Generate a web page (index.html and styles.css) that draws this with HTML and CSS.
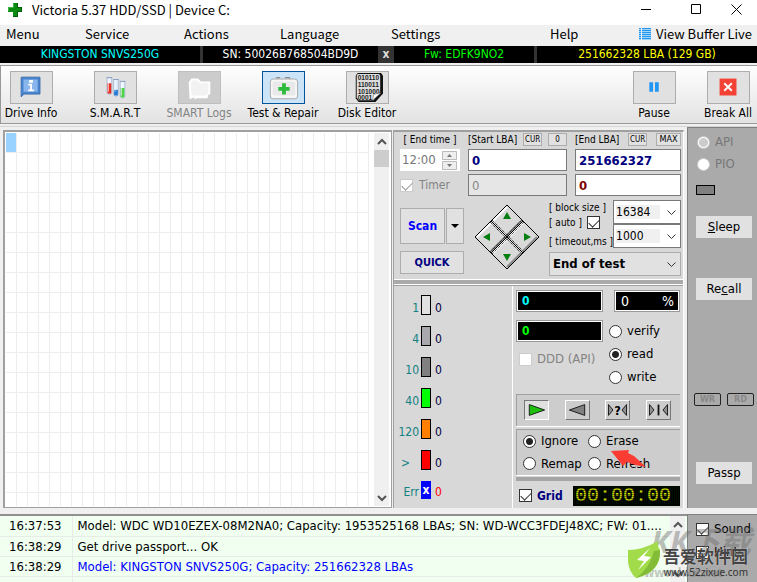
FILE: index.html
```html
<!DOCTYPE html>
<html lang="en">
<head>
<meta charset="utf-8">
<title>Victoria 5.37 HDD/SSD | Device C:</title>
<link rel="stylesheet" href="styles.css">
</head>
<body>
<div class="window">
  <header class="titlebar">
    <svg class="logo" viewBox="0 0 14 14"><path d="M5 0h5v4h4v5h-4v5H5V9H0V4h5z" fill="#0a8a10"/><path d="M9.500 0v4.500H13.500V8.500H9.500V13.500H5" fill="none" stroke="#055a08"/><path d="M5.500 4.500V.5M.5 8V4.500H5" fill="none" stroke="#3fb845"/></svg>
    <h1 class="title">Victoria 5.37 HDD/SSD | Device C:</h1>
    <div class="winbuttons">
      <button class="winbtn" aria-label="Minimize"><svg viewBox="0 0 11 11"><path d="M0 5.500h10" stroke="#000"/></svg></button>
      <button class="winbtn" aria-label="Maximize"><svg viewBox="0 0 11 11"><path d="M.5.5h9v9h-9z" fill="none" stroke="#000"/></svg></button>
      <button class="winbtn" aria-label="Close"><svg viewBox="0 0 11 11"><path d="M.5.5l10 10M10.500.5l-10 10" stroke="#000"/></svg></button>
    </div>
  </header>

  <nav class="menubar">
    <a href="#">Menu</a><a href="#">Service</a><a href="#">Actions</a><a href="#">Language</a><a href="#">Settings</a><a href="#">Help</a>
    <a href="#" class="buffer"><svg viewBox="0 0 12 12" shape-rendering="crispEdges"><path d="M0 0h2v12H0zM3 0h9v12H3z" fill="#a4d3f8"/><g fill="#2196f3"><path d="M0 0h2v1H0zM0 2h2v1H0zM0 4h2v1H0zM0 6h2v1H0zM0 8h2v1H0zM0 10h2v1H0z"/><path d="M3 0h9v1H3zM3 2h9v1H3zM3 4h9v1H3zM3 6h9v1H3zM3 8h9v1H3zM3 10h9v1H3z"/></g></svg>View Buffer Live</a>
  </nav>

  <section class="drivebar">
    <span class="model">KINGSTON SNVS250G</span>
    <span class="serial">SN: 50026B768504BD9D</span>
    <button class="clear">x</button>
    <span class="firmware">Fw: EDFK9NO2</span>
    <span class="capacity">251662328 LBA (129 GB)</span>
  </section>

  <section class="toolbar">
    <div class="tools">
      <button class="tool"><span class="face"><svg viewBox="0 0 43 33"><path d="M10.500 5.500h20v18h-17l-3 3z" fill="#4a86cf" stroke="#396cae"/><path d="M13 8h15v13H13z" fill="#8ab6ee"/><path d="M19 9h4v3h-4zM18 13h4v6h2v2h-6v-2h2v-4h-2z" fill="#fff" transform="translate(0 -.5)"/></svg></span>Drive Info</button>
      <button class="tool"><span class="face"><svg viewBox="0 0 43 33"><g stroke="#a9bbd3"><path d="M12.500 6v16q2.500 4 5 0V6z" fill="#edf2ff"/><path d="M19.500 8v16q2.500 4 5 0V8z" fill="#e3f0ff"/><path d="M26.500 10v16q2.500 4 5 0V10z" fill="#edf5ff"/></g><path d="M13 12h4v11h-4z" fill="#e82d23"/><path d="M20 19h4v6h-4z" fill="#2379d3"/><path d="M27 17h4v10h-4z" fill="#4ad342"/><path d="M12 6h6M19 8h6M26 10h6" stroke="#8a9fbd"/><path d="M14 8v13M21 9v12M28 12v13" stroke="#fff" opacity=".7"/></svg></span>S.M.A.R.T</button>
      <button class="tool" disabled><span class="face"><svg viewBox="0 0 43 33"><path d="M10 11l3-4h7l3 3h10v14h-2l-1 4H19l-3 1v-2l-5 2z" fill="#fff"/><path d="M12 12l2-3h5l3 3h9v10l-2 3H13z" fill="#f2f2f2"/></svg></span>SMART Logs</button>
      <button class="tool active"><span class="face"><svg viewBox="0 0 43 33"><path d="M14 7V6h4M23 6h5v2" stroke="#777" fill="none"/><rect x="7.500" y="7.500" width="29" height="21" rx="3" fill="#f7f7f7" stroke="#a5a5a5"/><rect x="10" y="10" width="24" height="15" rx="2" fill="#e9e9e9"/><path d="M20 12h4v4h4v4h-4v4h-4v-4h-4v-4h4z" fill="#2dbb3a"/></svg></span>Test &amp; Repair</button>
      <button class="tool"><span class="face"><svg viewBox="0 0 43 33"><path d="M11 1h25l2 3v19l-8 9H12l-3-4V4z" fill="#111"/><path d="M11 2h23l1 2v17l-7 9H12l-2-3V4z" fill="#ddd"/><g class="bits"><text x="11" y="9">010110</text><text x="11" y="16">110011</text><text x="11" y="23">101000</text><text x="11" y="30">0001</text></g><path d="M27 30l1-6 8-2z" fill="#fff" stroke="#555" stroke-width=".5"/></svg></span>Disk Editor</button>
    </div>
    <div class="tools runtools">
      <button class="tool"><span class="face"><svg viewBox="0 0 43 33"><path d="M16 11h4v10h-4zM22 11h4v10h-4z" fill="#2196f3"/></svg></span>Pause</button>
      <button class="tool"><span class="face"><svg viewBox="0 0 43 33"><path d="M12 7h18v18H12z" fill="#f44336"/><path d="M17 12l8 8M25 12l-8 8" stroke="#fff" stroke-width="2"/></svg></span>Break All</button>
    </div>
  </section>

  <main class="main">
    <section class="surface">
      <div class="cells"><div class="cell"></div></div>
      <div class="scroll">
        <svg viewBox="0 0 15 17"><path d="M4 11l4-4 4 4" class="arrow"/></svg>
        <div class="thumb"></div>
        <svg class="down" viewBox="0 0 15 17"><path d="M4 7l4 4 4-4" class="arrow"/></svg>
      </div>
    </section>

    <section class="controls">
      <div class="setup">
        <div class="ranges">
          <div class="field">
            <label class="cap mid" for="endtime">[ End time ]</label>
            <div class="timebox"><input id="endtime" value="12:00" disabled><svg viewBox="0 0 15 19"><path d="M.5.5h14v8H.5zM.5 10.500h14v8H.5z" fill="#eee" stroke="#bbb"/><path d="M5 6l2.500-3L10 6zM5 13h5l-2.500 3z" fill="#777"/></svg></div>
            <label class="check timer"><input type="checkbox" checked disabled>Timer</label>
          </div>
          <div class="field">
            <div class="cap"><label for="start">[Start LBA]</label><button class="mini">CUR</button><button class="mini">0</button></div>
            <input id="start" class="num" value="0">
            <input class="num off" value="0" aria-label="Current start" disabled>
          </div>
          <div class="field">
            <div class="cap"><label for="end">[End LBA]</label><button class="mini">CUR</button><button class="mini wide">MAX</button></div>
            <input id="end" class="num" value="251662327">
            <input class="num red" value="0" aria-label="Current end">
          </div>
        </div>
        <div class="actions">
          <div class="scan">
            <div class="scanrow"><button class="btn blue">Scan</button><button class="btn drop" aria-label="Scan options"><svg viewBox="0 0 8 4"><path d="M0 0h8L4 4z"/></svg></button></div>
            <button class="btn quick">QUICK</button>
          </div>
          <svg class="pad" viewBox="0 0 66 66">
            <g fill="#d9d9d9"><path d="M33 1l16 16-16 16-16-16zM17 17l16 16-16 16L1 33zM49 17l16 16-16 16-16-16zM33 33l16 16-16 16-16-16z"/></g>
            <path d="M19 17L33 3M3 33l14-14M35 33l14-14M19 49l14-14" stroke="#fff" fill="none" stroke-width="2"/>
            <path d="M33 31l14-14M49 47l14-14M17 47l14-14M33 63l14-14" stroke="#888" fill="none" stroke-width="2"/>
            <path d="M33 1l32 32-32 32L1 33zM17 17l32 32M49 17L17 49" stroke="#000" fill="none"/>
            <path d="M18 16l32 32M16 18l32 32M50 18L18 50M48 16L16 48" stroke="#000" stroke-dasharray="1 1" fill="none"/>
            <path d="M29 15l4-7 4 7zM16 29l-7 4 7 4zM50 29l7 4-7 4zM29 50h8l-4 7z" fill="#087f12"/>
          </svg>
          <div class="params">
            <div class="paramrows">
              <div class="captions">
                <label for="block">[ block size ]</label>
                <label class="auto">[ auto ]<input type="checkbox" checked></label>
                <label for="timeout">[ timeout,ms ]</label>
              </div>
              <div class="selects">
                <span class="select"><select id="block"><option>16384</option></select><svg viewBox="0 0 9 6"><path d="M.5.5l4 4 4-4"/></svg></span>
                <span class="select"><select id="timeout"><option>1000</option></select><svg viewBox="0 0 9 6"><path d="M.5.5l4 4 4-4"/></svg></span>
              </div>
            </div>
            <span class="select finish"><select aria-label="On finish"><option>End of test</option></select><svg viewBox="0 0 9 6"><path d="M.5.5l4 4 4-4"/></svg></span>
          </div>
        </div>
      </div>
      <div class="bar"></div>
      <div class="lower">
        <div class="legend">
          <div class="row"><span>1</span><i class="b1"></i><b>0</b></div>
          <div class="row"><span>4</span><i class="b4"></i><b>0</b></div>
          <div class="row"><span>10</span><i class="b10"></i><b>0</b></div>
          <div class="row"><span>40</span><i class="b40"></i><b>0</b></div>
          <div class="row"><span>120</span><i class="b120"></i><b>0</b></div>
          <div class="row"><span class="more">&gt;</span><i class="bmax"></i><b>0</b></div>
          <div class="row err"><span>Err</span><i>x</i><b>0</b></div>
        </div>
        <div class="status">
          <div class="readout">
            <div class="stack">
              <div class="lcd cyan">0</div>
              <div class="lcd green">0</div>
              <label class="check ddd"><input type="checkbox" disabled>DDD (API)</label>
            </div>
            <div class="stack">
              <div class="lcd percent"><span>0</span><span>%</span></div>
              <div class="modes">
                <label class="radio"><input type="radio" name="mode">verify</label>
                <label class="radio"><input type="radio" name="mode" checked>read</label>
                <label class="radio"><input type="radio" name="mode">write</label>
              </div>
            </div>
          </div>
          <div class="transport">
            <button class="play on" aria-label="Forward"><svg viewBox="0 0 24 20"><path d="M4 4v12l17-6z" fill="#20c010" stroke="#111"/></svg></button>
            <button class="play" aria-label="Backward"><svg viewBox="0 0 24 20"><path d="M20 4v12L3 10z" fill="#808080" stroke="#111"/></svg></button>
            <button class="play" aria-label="Random"><svg viewBox="0 0 24 20"><path d="M2 4v12l5-6zM22 4v12l-5-6z" fill="#909090" stroke="#111"/><text x="12" y="15" text-anchor="middle" class="q">?</text></svg></button>
            <button class="play" aria-label="Butterfly"><svg viewBox="0 0 24 20"><path d="M2 4v12l5-6zM22 4v12l-5-6z" fill="#909090" stroke="#111"/><path d="M12 4v12" stroke="#111" stroke-width="2"/></svg></button>
          </div>
          <div class="errors">
            <label class="radio"><input type="radio" name="err" checked>Ignore</label>
            <label class="radio"><input type="radio" name="err">Erase</label>
            <label class="radio"><input type="radio" name="err">Remap</label>
            <label class="radio"><input type="radio" name="err">Refresh</label>
            <svg class="pointer" viewBox="0 0 36 20"><path d="M0 1l18-1-1 3 6 3 12 11-11-2-8-3-4 4z" fill="#fa3c32"/></svg>
          </div>
          <div class="rule"></div>
          <div class="foot">
            <label class="check grid"><input type="checkbox" checked>Grid</label>
            <div class="clock">00:00:00</div>
          </div>
        </div>
      </div>
    </section>

    <aside class="side">
      <label class="radio"><input type="radio" name="io" checked disabled>API</label>
      <label class="radio"><input type="radio" name="io" disabled>PIO</label>
      <div class="led"></div>
      <button class="sidebtn sleep"><u>S</u>leep</button>
      <button class="sidebtn recall">Re<u>c</u>all</button>
      <div class="leds"><span>WR</span><span>RD</span></div>
      <button class="sidebtn">Passp</button>
    </aside>
  </main>

  <footer class="footer">
    <div class="log">
      <table>
        <tr><td class="time">16:37:53</td><td>Model: WDC WD10EZEX-08M2NA0; Capacity: 1953525168 LBAs; SN: WD-WCC3FDEJ48XC; FW: 01....</td></tr>
        <tr><td class="time">16:38:29</td><td>Get drive passport... OK</td></tr>
        <tr class="info"><td class="time">16:38:29</td><td>Model: KINGSTON SNVS250G; Capacity: 251662328 LBAs</td></tr>
        <tr><td class="time"></td><td></td></tr>
      </table>
      <div class="scroll logscroll">
        <svg viewBox="0 0 15 17"><path d="M4 11l4-4 4 4" class="arrow"/></svg>
        <svg class="down" viewBox="0 0 15 17"><path d="M4 7l4 4 4-4" class="arrow"/></svg>
      </div>
    </div>
    <div class="options">
      <label class="check"><input type="checkbox" checked>Sound</label>
      <label class="check"><input type="checkbox" checked>Hints</label>
    </div>
    <div class="stamp">
      <span class="ghost">KK下载</span>
      <span class="ghosturl">www.kkx.net</span>
      <svg class="shield" viewBox="0 0 34 40"><path d="M0 10q15 0 30-9-1 6 2 9 1 22-24 28Q-2 30 0 10z" fill="#a3dc4a"/><path d="M32 10q1 22-24 28Q22 28 26 11z" fill="#83bd38"/><path d="M22 8L9 20l7 1-6 9 13-13-7-1z" fill="#fff"/></svg>
      <span class="brand">吾爱软件园</span>
      <span class="url">www.52zixue.com</span>
    </div>
  </footer>
</div>
</body>
</html>
```

FILE: styles.css
```css
* { box-sizing: border-box; }
body {
  margin: 0;
  font: 12px/16px "DejaVu Sans Condensed", "DejaVu Sans", sans-serif;
  color: #000;
  background: #f0f0f0;
}
button, input, select { font: inherit; color: inherit; margin: 0; padding: 0; border-radius: 0; }
button { border: 0; background: none; }
a { color: inherit; text-decoration: none; }
svg { display: block; }
.window { display: flex; flex-direction: column; height: 100vh; overflow: hidden; }

/* title and menu */
.titlebar { display: flex; align-items: center; height: 25px; padding: 0 4px 6px 8px; background: #fff; }
.logo { width: 14px; height: 14px; }
.title { margin: 0 0 0 10px; font: 13px/18px "Noto Sans CJK SC", sans-serif; flex: 1; }
.winbuttons { display: flex; }
.winbtn { width: 46px; height: 18px; display: flex; justify-content: center; align-items: center; }
.winbtn:last-child { width: 34px; }
.winbtn:first-child { width: 54px; }
.winbtn svg { width: 11px; height: 11px; }
.menubar {
  display: grid;
  grid-template-columns: 79px 99px 96px 111px 159px 1fr auto;
  align-items: center;
  height: 21px;
  padding: 0 5px 3px 6px;
  font: 13px/18px "Noto Sans CJK SC", sans-serif;
}
.buffer { display: flex; align-items: center; gap: 5px; }
.buffer svg { width: 12px; height: 12px; }

/* drive strip */
.drivebar {
  display: grid;
  grid-template-columns: 200px minmax(0, 1fr) 10px 140px 220px;
  gap: 3px;
  height: 17px;
  background: #333;
  color: #fff;
  text-align: center;
  line-height: 17px;
}
.drivebar > * { background: #000; }
.model { color: #0ff; }
.firmware { color: #0f0; }
.capacity { color: #ff0; }
.drivebar .clear { background: #333; font-weight: bold; color: #ddd; line-height: 15px; }

/* toolbar */
.toolbar {
  display: flex;
  justify-content: space-between;
  height: 59px;
  margin-top: 2px;
  padding: 5px 1px 0 0;
  border: solid #999;
  border-width: 1px 0 1px 1px;
  background: linear-gradient(#fff, #e2e2e2);
}
.tools { display: flex; gap: 24px; }
.runtools { gap: 18px; }
.tool { width: 60px; display: flex; flex-direction: column; align-items: center; gap: 1px; white-space: nowrap; }
.runtools .tool { width: 56px; }
.face { width: 43px; height: 33px; border: 1px solid #adadad; background: #e1e1e1; }
.face svg { width: 41px; height: 31px; }
.tool:disabled { color: #838383; }
.tool:disabled .face { background: #ccc; border-color: #bfbfbf; }
.active .face { background: #cce4f7; border-color: #005499; }
.bits { font: bold 7px "Liberation Sans", sans-serif; fill: #222; }

/* main area */
.main {
  flex: 1;
  min-height: 0;
  display: grid;
  grid-template: minmax(0, 1fr) / minmax(0, 1fr) 291px 73px;
  margin-top: 2px;
  padding-bottom: 6px;
  border-top: 1px solid #d4d4d4;
  background: #f0f0f0;
}
.surface {
  display: flex;
  margin: 3px 1px 0 3px;
  padding: 1px 2px 1px 1px;
  border: 2px solid #a0a0a0;
  border-width: 2px 1px 1px 2px;
  background: #fff;
}
.cells {
  flex: 1;
  margin-right: 5px;
  background:
    repeating-linear-gradient(90deg, transparent 0 10px, #ededed 10px 11px),
    repeating-linear-gradient(transparent 0 19px, #ededed 19px 20px);
}
.cell { width: 10px; height: 19px; background: #99d1ff; }
.scroll { width: 15px; display: flex; flex-direction: column; background: #f0f0f0; }
.scroll svg { width: 15px; height: 17px; flex: none; }
.thumb { height: 17px; background: #cdcdcd; }
.scroll .down { margin-top: auto; }
.arrow { fill: none; stroke: #555; stroke-width: 2; }

/* controls */
.controls { display: flex; flex-direction: column; min-height: 0; margin-top: 3px; background: #d8d8d8; border-left: 1px solid #a0a0a0; border-right: 1px solid #fff; border-top: 2px solid #a0a0a0; }
.setup { padding: 1px 2px 3px 6px; }
.ranges { display: grid; grid-template-columns: 60px minmax(0, 1fr) 106px; gap: 8px; }
.field { display: flex; flex-direction: column; gap: 3px; }
.cap { display: flex; align-items: center; justify-content: space-between; height: 13px; font-size: 10px; white-space: nowrap; }
.mid { justify-content: center; }
.mini { width: 19px; height: 13px; border: 1px solid #adadad; background: #e1e1e1; font-size: 8px; line-height: 11px; }
.mini.wide { width: 25px; font-size: 9px; }
.num { width: 100%; height: 22px; padding-left: 3px; border: 1px solid #7a7a7a; background: #fff; font-size: 13px; font-weight: bold; color: #000080; outline: 0; }
.num.red { color: #800000; }
.num.off { background: #e6e6e6; color: #888; font-weight: normal; }
.timebox { display: flex; height: 22px; padding: 1px 2px; background: #fff; align-items: center; }
.timebox input { width: 40px; border: 0; background: none; color: #777; font-size: 13px; }
.timebox svg { width: 15px; height: 19px; }
.check, .radio { display: flex; align-items: center; gap: 6px; font-size: 13px; line-height: 16px; white-space: nowrap; }
.timer { height: 22px; font-size: 12px; color: #838383; }
input[type="checkbox"], input[type="radio"] { appearance: none; flex: none; width: 13px; height: 13px; border: 1px solid #333; background: #fff; }
input[type="radio"] { border-radius: 50%; }
input[type="radio"]:checked { background: radial-gradient(circle, #222 0 3px, #fff 4px); }
input[type="checkbox"] { position: relative; }
input[type="checkbox"]:checked::after { content: ""; position: absolute; left: 1px; top: 2px; width: 9px; height: 5px; border: solid #333; border-width: 0 0 1px 1px; transform: rotate(-45deg); }
input[type="checkbox"]:disabled, input[type="radio"]:disabled { border-color: #ccc; }
input[type="checkbox"]:disabled:checked::after { border-color: #999; }
input[type="radio"]:disabled:checked { background: radial-gradient(circle, #ccc 0 4px, #fff 5px); }
.actions { display: flex; justify-content: space-between; padding-top: 4px; }
.scan { width: 64px; display: flex; flex-direction: column; gap: 7px; padding-top: 8px; }
.scanrow { display: flex; gap: 1px; }
.btn { border: 1px solid #adadad; background: #e1e1e1; font-weight: bold; }
.blue { flex: 1; height: 36px; color: #00f; }
.drop { width: 18px; display: flex; align-items: center; justify-content: center; }
.drop svg { width: 8px; height: 4px; }
.quick { height: 23px; color: #000080; font-size: 11px; }
.pad { width: 66px; height: 66px; margin-top: 4px; }
.params { width: 132px; display: flex; flex-direction: column; gap: 3px; }
.paramrows { display: flex; justify-content: space-between; }
.captions { display: flex; flex-direction: column; font-size: 10px; line-height: 15px; white-space: nowrap; }
.captions label:last-child { padding-top: 4px; }
.auto { display: flex; gap: 5px; align-items: center; }
.selects { width: 68px; display: flex; flex-direction: column; }
.select { position: relative; display: block; height: 24px; background: #fff; border: 1px solid #7a7a7a; }
.select select { appearance: none; display: block; width: 100%; height: 100%; border: 0; padding-left: 2px; background: linear-gradient(#f0f0f0, #f0f0f0) 2px 4px / 44px 14px no-repeat; }
.select svg { position: absolute; right: 4px; top: 9px; width: 9px; height: 6px; fill: none; stroke: #333; pointer-events: none; }
.finish { background: #e1e1e1; border-color: #adadad; font-size: 13px; font-weight: bold; }
.finish select { background: none; padding-left: 3px; }
.bar { height: 6px; flex: none; border: solid #fff; border-width: 1px 0; background: #aaa; }

/* lower part */
.lower { flex: 1; min-height: 0; display: grid; grid-template-columns: minmax(0, 1fr) 171px; border-top: 1px solid #a0a0a0; }
.legend { padding-top: 9px; }
.row { display: grid; grid-template-columns: 25px 10px 1fr; gap: 2px; height: 31px; align-items: start; color: #108080; }
.row span { text-align: right; padding-top: 5px; }
.row .more { padding-right: 9px; }
.row i { height: 20px; border: 1px solid #000; }
.row b { padding: 5px 0 0 2px; font-weight: normal; color: #000040; }
.b1 { background: #e0e0e0; }
.b4 { background: #a9a9ad; }
.b10 { background: #808080; }
.b40 { background: #0f0; }
.b120 { background: #ff8000; }
.bmax { background: #f00; }
.row.err { height: 20px; }
.err i { height: 18px; border: 0; background: #00f; color: #fff; font: bold 12px/18px "DejaVu Sans Condensed", sans-serif; text-align: center; }
.err b { color: #f00; }
.err span, .err b { padding-top: 3px; }
.status { display: flex; flex-direction: column; padding: 4px 3px 0 3px; border-left: 1px solid #fff; }
.readout { display: flex; justify-content: space-between; }
.stack { display: flex; flex-direction: column; gap: 8px; }
.lcd { width: 87px; height: 22px; padding-left: 5px; border: 1px solid #999; outline: 1px solid #fff; outline-offset: -2px; background: #000; line-height: 20px; font-weight: bold; }
.cyan { color: #0ff; }
.green { color: #0f0; }
.percent { width: 66px; display: flex; justify-content: space-between; padding: 0 5px 0 6px; color: #fff; font-size: 14px; font-weight: normal; }
.ddd { padding: 1px 3px; gap: 5px; color: #838383; }
.modes { margin-left: -5px; display: flex; flex-direction: column; gap: 7px; margin-top: 3px; }
.radio { gap: 5px; }
.transport, .errors { border: solid #a0a0a0; border-width: 1px 0 0 1px; box-shadow: 0 1px #fff; background: #cdcdcd; }
.transport { display: flex; justify-content: space-between; margin-top: 9px; height: 32px; padding: 5px 9px 5px 7px; }
.play { width: 25px; height: 20px; border: 1px solid #fff; border-right-color: #777; border-bottom-color: #777; background: #ccc; }
.play svg { width: 23px; height: 18px; }
.play.on { border-color: #777 #fff #fff #777; background: #e0e0e0; }
.q { font: bold 14px "DejaVu Sans Condensed", sans-serif; }
.errors { position: relative; display: grid; grid-template-columns: 65px 1fr; align-items: center; height: 46px; margin-top: 3px; padding-left: 6px; }
.pointer { position: absolute; left: 94px; top: 20px; width: 36px; height: 20px; }
.rule { height: 4px; flex: none; margin-top: 2px; background: #a5a5a5; }
.foot { display: flex; justify-content: space-between; align-items: center; flex: 1; padding: 2px 0 0 3px; }
.grid { color: #000080; font-size: 12px; font-weight: bold; gap: 5px; }
.clock { position: relative; width: 107px; height: 20px; padding-left: 2px; background: #000; color: #ff0; font: 20px/20px "Liberation Mono", monospace; }
.clock::after { content: ""; position: absolute; inset: 0; background: repeating-linear-gradient(rgba(0, 0, 0, .4) 0 1px, transparent 1px 2px), repeating-linear-gradient(90deg, rgba(0, 0, 0, .2) 0 1px, rgba(0, 90, 0, .2) 1px 2px); }

/* side column */
.side { display: flex; flex-direction: column; min-height: 0; margin: 0 0 0 3px; padding: 7px 5px 0 8px; background: #aaa; border: solid #808080; border-width: 1px 0 0 1px; font-size: 13px; }
.side .radio { height: 22px; padding-left: 1px; color: #777; margin-top: -4px; margin-bottom: 4px; }
.led { width: 19px; height: 10px; margin-top: 6px; background: #808080; border: 1px solid #000; }
.sidebtn { height: 22px; background: #e1e1e1; }
.sleep { margin-top: 21px; }
.recall { margin-top: 40px; }
.leds { display: flex; justify-content: space-between; margin: auto -2px 56px -2px; }
.leds span { width: 27px; height: 13px; border: 1px solid #222; border-radius: 2px; color: #888; font-size: 9px; font-weight: bold; line-height: 11px; text-align: center; }
.side .sidebtn:last-child { margin-bottom: 24px; }

/* log */
.footer { position: relative; display: grid; grid-template-columns: minmax(0, 1fr) 70px; height: 68px; }
.log { display: flex; overflow: hidden; border-top: 2px solid #909090; background: #f0fff0; padding-right: 2px; font-size: 13px; }
.log table { flex: 1; min-width: 0; border-collapse: collapse; table-layout: fixed; width: 100%; }
.log tr { height: 20px; }
.log td { height: 20px; padding: 0 0 0 5px; border-bottom: 1px solid #e8ece8; white-space: nowrap; line-height: 19px; overflow: hidden; }
.log .time { width: 72px; padding-left: 9px; color: #000; border-right: 1px solid #e8ece8; }
.log .scroll { flex: none; }
.info { color: #00f; }
.options { padding: 6px 0 0 8px; background: #aaa; border: solid #808080; border-width: 1px 0 0 1px; display: flex; flex-direction: column; gap: 7px; }
.options .check { gap: 5px; }
.stamp { position: absolute; inset: 0; overflow: hidden; pointer-events: none; font-family: "Noto Sans", "Noto Sans CJK SC", sans-serif; }
.stamp > * { position: absolute; white-space: nowrap; }
.ghost { right: 6px; top: 12px; font-size: 31px; line-height: 31px; font-style: italic; font-weight: bold; color: rgba(110, 110, 110, .45); }
.ghosturl { right: 34px; top: 52px; font-size: 12px; line-height: 14px; color: rgba(110, 110, 110, .4); font-weight: bold; }
.shield { right: 95px; top: 26px; width: 34px; height: 40px; }
.brand { right: 9px; top: 33px; font-size: 17px; line-height: 20px; font-weight: bold; color: #444; text-shadow: 0 0 1px #fff; }
.url { right: 9px; top: 50px; font-size: 10px; line-height: 16px; color: #333; }
```
